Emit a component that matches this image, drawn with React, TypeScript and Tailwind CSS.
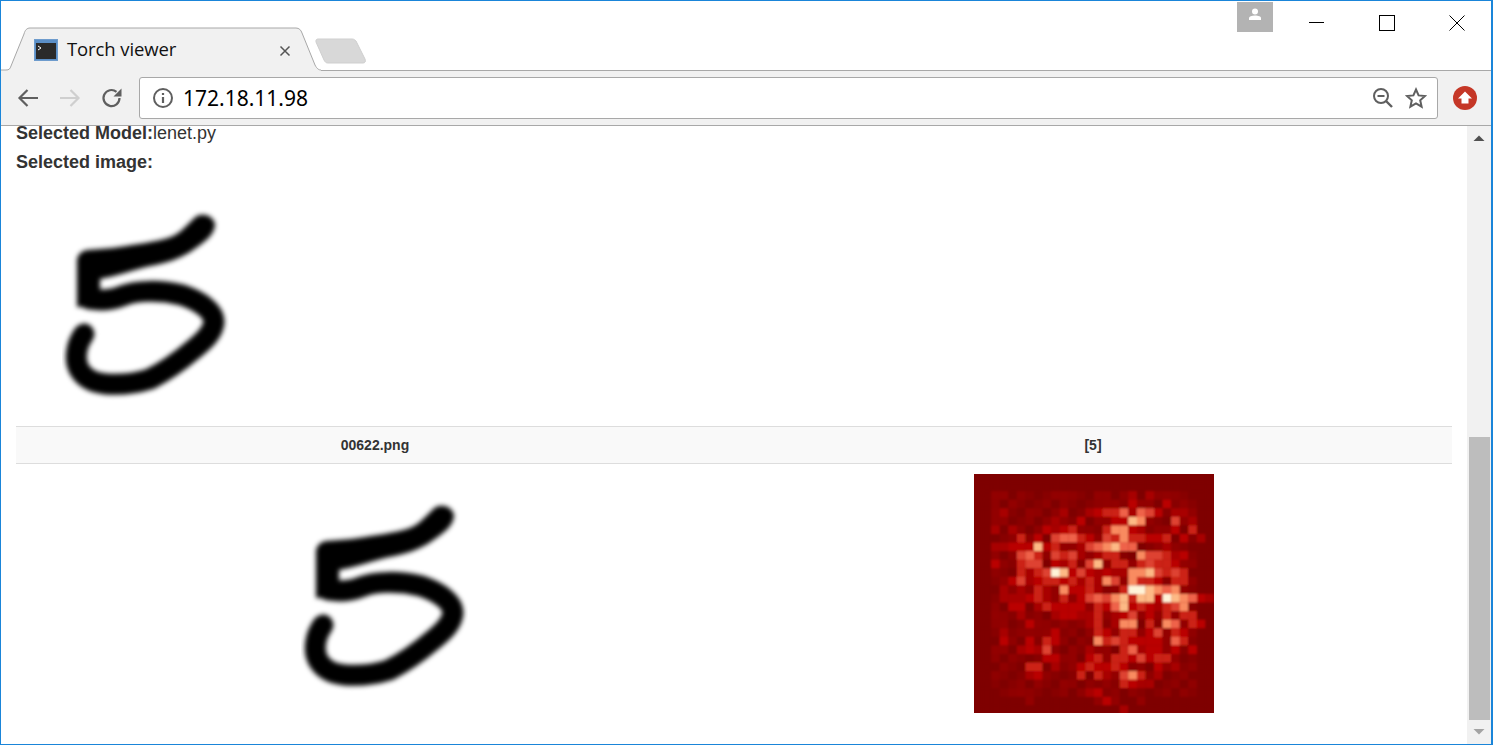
const heat = [
  "0000000000000000000000000000",
  "0000000000000000000000000000",
  "0011000001100011002020100000",
  "0000100000000001103110301000",
  "0012001000200234462653022100",
  "0011000002103011338710051200",
  "0020200032341004773201130400",
  "0000040305664315474433403020",
  "0022333834112567866001200000",
  "0010056405452124400755423000",
  "0030045503240580441454431000",
  "0000042459835323227785454000",
  "0001352344342427517443044000",
  "0002021421733420049987671000",
  "0002223421413565784883987632",
  "0000330243333143683432457000",
  "0010020002332241235131414400",
  "0001003100100240277040761430",
  "0002001013000143144135143000",
  "0003003043000074543333164000",
  "0011023250010211046233130300",
  "0000000033010341443534410000",
  "0000004402013433430003120000",
  "0000002300004042157402000000",
  "0000000100100001043220000000",
  "0000010000000230000000000000",
  "0000001000000013100100000000",
  "0000000000000000020000000000",
];

const heatColors = ["#7f0000", "#930000", "#a80000", "#ba0202", "#cc2414", "#de4230", "#ef6248", "#f98b60", "#fdb985", "#fff3d8"];

// the empty cells inside the digit area are not flat, they sit a notch above the border colour
const cellColor = (c: string, x: number, y: number) => {
  if (c !== "0") return heatColors[Number(c)];
  if (x < 2 || x > 25 || y < 2 || y > 25) return "#7f0000";
  return (x * 7 + y * 13) % 3 === 0 ? "#7f0000" : (x + y) % 2 === 0 ? "#880000" : "#900000";
};

const Digit = ({ id }: { id: string }) => (
  <svg viewBox="0 0 240 240" className="w-[240px] h-[240px] block">
    <defs>
      <filter id={id}>
        <feGaussianBlur stdDeviation="2.6" />
      </filter>
    </defs>
    <g filter={`url(#${id})`}>
      <path
        fill="#000"
        d="M61 76C63 70 66 68 71 67C90 66 105 64 116 62C135 59 150 57 159 52C168 47 174 38 181 33C188 30 197 33 199 41C199 48 194 54 189 58C178 67 170 72 160 76C148 81 137 82 126 85C115 88 100 93 84 96V124H61Z"
      />
      <path
        fill="none"
        stroke="#000"
        strokeLinecap="round"
        strokeLinejoin="round"
        strokeWidth="21"
        d="M73 116C85 118 96 117 106 113C120 107 145 107 166 112C184 118 198 128 198 139C197 150 188 158 178 166C165 177 150 188 134 196C118 201 103 202 90 201C78 200 68 195 63 186C58 176 60 162 68 151"
      />
    </g>
  </svg>
);

const HeatMap = () => (
  <div className="w-[240px] h-[239px] bg-[#7f0000] overflow-hidden">
    <svg viewBox="0 0 28 28" className="w-[240px] h-[240px] block">
      <defs>
        <filter id="soft">
          <feGaussianBlur stdDeviation="0.11" />
        </filter>
      </defs>
      <g filter="url(#soft)">
        {heat.map((row, y) =>
          row.split("").map((c, x) => <rect key={`${x}-${y}`} x={x} y={y} width="1.02" height="1.02" fill={cellColor(c, x, y)} />)
        )}
      </g>
    </svg>
  </div>
);

const Tab = () => (
  <div className="relative w-[320px] h-[70px] shrink-0">
    <svg viewBox="0 0 320 70" className="absolute inset-0 w-[320px] h-[70px]">
      <path d="M0 70V69H5C8 69 9 68 10 65L23 33C24 29 26 27 29 27H295C298 27 300 29 301 32L314 64C316 68 318 69 320 69V70Z" fill="#f1f1f1" />
      <path d="M0 69H5C8 69 9 68 10 65L23 33C24 29 26 27 29 27H295C298 27 300 29 301 32L314 64C316 68 318 69 320 69" fill="none" stroke="#a8a8a8" />
    </svg>
    <div className="relative flex items-center pl-[33px] pt-[38px] h-[59px]">
      <svg width="24" height="22" viewBox="0 0 24 22" className="shrink-0">
        <rect x="0.5" y="0.5" width="23" height="21" fill="#5b8fc7" stroke="#6e9ccd" />
        <rect x="2" y="4" width="20" height="16" fill="#2a2a2a" />
        <path d="M4 7l3 2-3 2" fill="none" stroke="#fff" strokeWidth="1" />
      </svg>
      <span className="ml-[9px] -mt-[2px] text-[18.5px] leading-[22px] text-[#111] font-['Open_Sans',sans-serif] tracking-[-0.1px]">Torch viewer</span>
      <svg width="12" height="12" viewBox="0 0 12 12" className="absolute left-[278px] top-[44px]">
        <path d="M1.5 1.5l9 9M10.5 1.5l-9 9" stroke="#555" strokeWidth="1.5" />
      </svg>
    </div>
  </div>
);

const WindowButtons = () => (
  <div className="ml-auto flex items-start">
    <div className="w-[36px] h-[30px] mt-[1px] mr-[36px] bg-[#b3b3b3] flex justify-center pt-[6px]">
      <svg width="14" height="14" viewBox="0 0 14 14">
        <circle cx="7" cy="3.5" r="3" fill="#fff" />
        <path d="M1 12V10C1 8.5 3.5 7.5 7 7.5S13 8.5 13 10V12Z" fill="#fff" />
      </svg>
    </div>
    <svg width="15" height="15" viewBox="0 0 15 15" className="mt-[14px] mr-[55px]">
      <path d="M0 7.5H15" stroke="#000" />
    </svg>
    <svg width="16" height="16" viewBox="0 0 16 16" className="mt-[14px] mr-[54px]">
      <rect x="0.5" y="0.5" width="15" height="15" fill="none" stroke="#000" />
    </svg>
    <svg width="16" height="16" viewBox="0 0 16 16" className="mt-[14px] mr-[26px]">
      <path d="M0.5 0.5L15.5 15.5M15.5 0.5L0.5 15.5" stroke="#000" />
    </svg>
  </div>
);

const Toolbar = () => (
  <div className="h-[55px] bg-[#f1f1f1] border-b border-[#a8a8a8] flex items-center shrink-0">
    <svg width="22" height="20" viewBox="0 0 22 20" className="ml-[16px]">
      <path d="M21 10H3M10.5 2L2.5 10L10.5 18" fill="none" stroke="#5f5f5f" strokeWidth="2.2" />
    </svg>
    <svg width="22" height="20" viewBox="0 0 22 20" className="ml-[20px]">
      <path d="M1 10H19M11.5 2L19.5 10L11.5 18" fill="none" stroke="#cfcfcf" strokeWidth="2.2" />
    </svg>
    <svg width="22" height="22" viewBox="0 0 22 22" className="ml-[20px]">
      <path d="M18.5 11A8 8 0 1 1 15.5 4.8" fill="none" stroke="#5f5f5f" strokeWidth="2.2" />
      <path d="M20.5 1.5V9.5H12.5Z" fill="#5f5f5f" />
    </svg>
    <div className="ml-[16px] w-[1299px] h-[42px] bg-white border border-[#a8a8a8] rounded-[3px] flex items-center pl-[12px] pr-[10px]">
      <svg width="22" height="22" viewBox="0 0 22 22" className="shrink-0">
        <circle cx="11" cy="11" r="9" fill="none" stroke="#5f5f5f" strokeWidth="2" />
        <path d="M11 10V16" stroke="#5f5f5f" strokeWidth="2.2" />
        <path d="M11 6V8" stroke="#5f5f5f" strokeWidth="2.2" />
      </svg>
      <span className="ml-[9px] text-[21px] leading-[26px] text-black font-['Noto_Sans',sans-serif]">172.18.11.98</span>
      <svg width="22" height="22" viewBox="0 0 22 22" className="ml-auto">
        <circle cx="9" cy="9" r="7" fill="none" stroke="#5f5f5f" strokeWidth="2" />
        <path d="M5.5 9H12.5" stroke="#5f5f5f" strokeWidth="2" />
        <path d="M14 14L20 20" stroke="#5f5f5f" strokeWidth="2.4" />
      </svg>
      <svg width="22" height="22" viewBox="0 0 22 22" className="ml-[11px]">
        <path d="M11 2.5L13.6 8.4L20 9L15.2 13.3L16.6 19.6L11 16.3L5.4 19.6L6.8 13.3L2 9L8.4 8.4Z" fill="none" stroke="#5f5f5f" strokeWidth="2" />
      </svg>
    </div>
    <svg width="24" height="24" viewBox="0 0 24 24" className="ml-[15px]">
      <circle cx="12" cy="12" r="12" fill="#c53727" />
      <path d="M12 5.5L19 12.5H15.5V17.5H8.5V12.5H5Z" fill="#fff" />
    </svg>
  </div>
);

const Scrollbar = () => (
  <div className="w-[24px] bg-[#f1f1f1] flex flex-col items-center shrink-0">
    <div className="h-[24px] flex items-center justify-center shrink-0">
      <svg width="12" height="6" viewBox="0 0 12 6">
        <path d="M0.5 6L6 0.5L11.5 6Z" fill="#505050" />
      </svg>
    </div>
    <div className="flex-1" />
    <div className="w-[21px] h-[283px] bg-[#bdbdbd] shrink-0" />
    <div className="h-[24px] flex items-center justify-center shrink-0">
      <svg width="12" height="6" viewBox="0 0 12 6">
        <path d="M0.5 0L6 5.5L11.5 0Z" fill="#a3a3a3" />
      </svg>
    </div>
  </div>
);

export default function App() {
  return (
    <div className="w-[1493px] h-[745px] flex flex-col overflow-hidden bg-white border border-r-2 border-[#1a85d9] font-['Liberation_Sans',sans-serif]">
      {/* Title bar */}
      <div className="h-[70px] border-b border-[#a8a8a8] flex items-start shrink-0">
        <div className="relative h-[70px] shrink-0">
          <Tab />
        </div>
        <svg width="52" height="26" viewBox="0 0 52 26" className="mt-[37px] -ml-[6px]">
          <path d="M1 4C0.5 2 1.5 1 3 1H37C39 1 40 2 41 3L50 21C51 23.5 50 25 48 25H13C11 25 10 24 9 22Z" fill="#d8d8d8" stroke="#cfcfcf" />
        </svg>
        <WindowButtons />
      </div>

      <Toolbar />

      {/* Page */}
      <div className="flex-1 flex min-h-0">
        <div className="flex-1 pl-[15px] pr-[15px] min-w-0 text-[#333]">
          <div className="h-[14px] text-[18px] leading-[14px]">
            <b className="font-bold">Selected Model:</b>lenet.py
          </div>
          <div className="mt-[15px] h-[14px] text-[18px] leading-[14px] font-bold">Selected image:</div>
          <div className="mt-[14px]">
            <Digit id="digit-top" />
          </div>
          <div className="mt-[3px] grid grid-cols-2 bg-[#f9f9f9] border-y border-[#ddd] h-[38px] items-center text-center text-[14px] font-bold text-[#333]">
            <div>00622.png</div>
            <div>[5]</div>
          </div>
          <div className="grid grid-cols-2 pt-[10px]">
            <div className="flex justify-center">
              <Digit id="digit-bottom" />
            </div>
            <div className="flex justify-center pl-[2px]">
              <HeatMap />
            </div>
          </div>
        </div>
        <Scrollbar />
      </div>
    </div>
  );
}
